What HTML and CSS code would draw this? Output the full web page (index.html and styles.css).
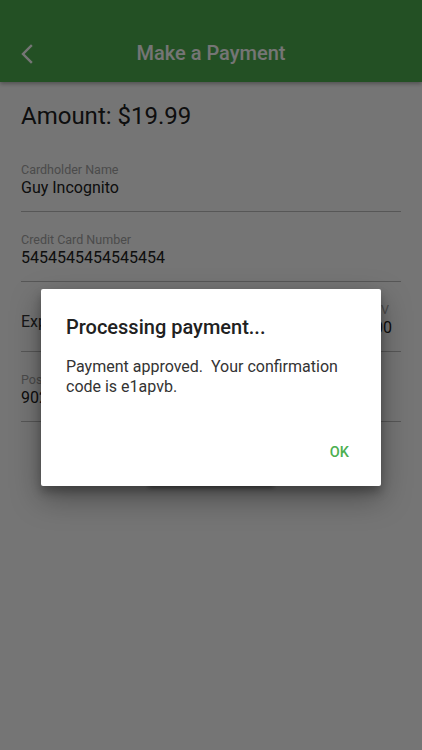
FILE: index.html
```html
<!DOCTYPE html>
<html lang="en">
<head>
<meta charset="utf-8">
<title>Make a Payment</title>
<link rel="stylesheet" href="styles.css">
</head>
<body>
<div class="app">
  <header class="appbar">
    <button class="back" aria-label="Back">
      <svg width="16" height="22" viewBox="0 0 16 22"><polyline points="12,3 4,11 12,19" fill="none" stroke="#fff" stroke-width="2.4" stroke-linecap="square" stroke-linejoin="miter"/></svg>
    </button>
    <h1 class="title">Make a Payment</h1>
    <span class="spacer"></span>
  </header>
  <main class="content">
    <div class="amount">Amount: $19.99</div>
    <div class="field">
      <div class="label">Cardholder Name</div>
      <div class="value">Guy Incognito</div>
    </div>
    <div class="field">
      <div class="label">Credit Card Number</div>
      <div class="value">5454545454545454</div>
    </div>
    <div class="row">
      <div class="field grow">
        <div class="placeholder">Expiration</div>
      </div>
      <div class="field cvv">
        <div class="label">CVV</div>
        <div class="value">000</div>
      </div>
    </div>
    <div class="field">
      <div class="label">Postal Code</div>
      <div class="value">90210</div>
    </div>
    <div class="actions-main">
      <button class="pay">PAY</button>
    </div>
  </main>
  <div class="scrim">
    <div class="dialog" role="dialog">
      <h2 class="dlg-title">Processing payment...</h2>
      <p class="dlg-body">Payment approved.&nbsp; Your confirmation<br>code is e1apvb.</p>
      <div class="dlg-actions"><button class="ok">OK</button></div>
    </div>
  </div>
</div>
</body>
</html>
```

FILE: styles.css
```css
* { box-sizing: border-box; }
html, body { margin: 0; padding: 0; }
body {
  font-family: Roboto, "Noto Sans", "Liberation Sans", sans-serif;
  background: #fff;
}
.app {
  position: relative;
  width: 422px;
  height: 750px;
  overflow: hidden;
  background: #fff;
}
.appbar {
  height: 82px;
  padding-top: 24px;
  background: #4caf50;
  display: flex;
  align-items: center;
  box-shadow: 0 2px 4px rgba(0,0,0,0.3);
}
.back {
  width: 60px;
  height: 58px;
  padding: 0 0 0 19px;
  border: 0;
  background: none;
  display: flex;
  align-items: center;
}
.back svg { display: block; margin-top: 2px; }
.title {
  flex: 1;
  margin: 0;
  text-align: center;
  color: #fff;
  font-size: 20px;
  font-weight: 500;
  line-height: 24px;
}
.spacer { width: 60px; }
.content {
  padding: 0 21px;
}
.amount {
  margin-top: 20px;
  font-size: 24px;
  line-height: 28px;
  color: #212121;
  margin-bottom: 32px;
}
.field {
  margin-top: 20px;
  padding-bottom: 13px;
  border-bottom: 1px solid #bdbdbd;
  height: 36px;
  box-sizing: content-box;
}
.label {
  font-size: 12.5px;
  line-height: 16px;
  color: #a4a4a4;
}
.value {
  font-size: 16px;
  line-height: 20px;
  color: #212121;
}
.placeholder {
  padding-top: 10px;
  font-size: 16px;
  line-height: 20px;
  color: #333;
}
.row {
  display: flex;
  gap: 16px;
}
.grow { flex: 1; }
.cvv { width: 36px; }
.actions-main {
  display: flex;
  justify-content: center;
  margin-top: 24px;
}
.pay {
  width: 126px;
  height: 40px;
  border: 0;
  border-radius: 2px;
  background: #4caf50;
  color: #fff;
  font-family: inherit;
  font-size: 14px;
  font-weight: 500;
  box-shadow: 0 2px 4px rgba(0,0,0,0.35);
}
.scrim {
  position: absolute;
  inset: 0;
  background: rgba(0,0,0,0.54);
  display: flex;
  justify-content: center;
  align-items: flex-start;
  padding-top: 289px;
}
.dialog {
  width: 340px;
  height: 197px;
  background: #fff;
  border-radius: 2px;
  box-shadow: 0 12px 30px rgba(0,0,0,0.35), 0 6px 10px rgba(0,0,0,0.25);
  padding: 26px 25px 0 25px;
  display: flex;
  flex-direction: column;
}
.dlg-title {
  margin: 0;
  font-size: 20px;
  font-weight: 500;
  line-height: 24px;
  color: #212121;
}
.dlg-body {
  margin: 18px 0 0 0;
  font-size: 16px;
  line-height: 19.5px;
  color: #333;
}
.dlg-actions {
  margin-top: auto;
  display: flex;
  justify-content: flex-end;
  padding-bottom: 23px;
  padding-right: 7px;
}
.ok {
  border: 0;
  background: none;
  padding: 0;
  font-family: inherit;
  font-size: 14.5px;
  font-weight: 500;
  line-height: 20px;
  color: #4caf50;
}
```
